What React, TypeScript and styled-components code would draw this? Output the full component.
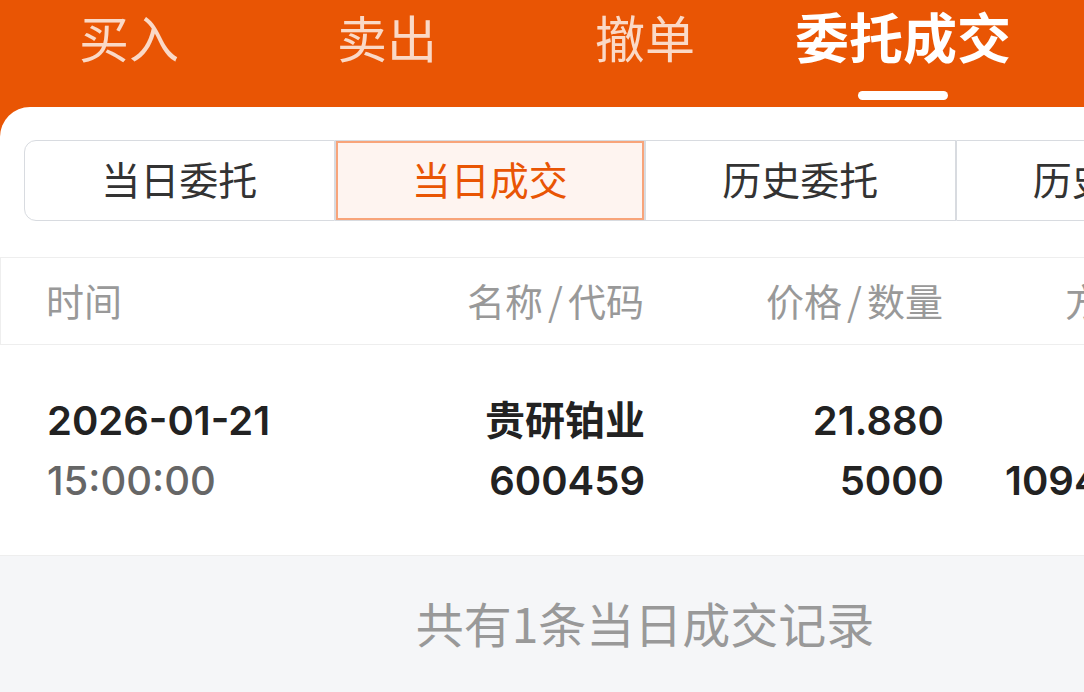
import React from "react";
import styled, { createGlobalStyle } from "styled-components";

const GlobalStyle = createGlobalStyle`
  html, body {
    margin: 0;
    padding: 0;
    overflow: hidden;
    background: #ffffff;
  }
  body {
    font-family: "Inter", "Noto Sans CJK SC", "Noto Sans", sans-serif;
    -webkit-font-smoothing: antialiased;
  }
  * { box-sizing: border-box; }
`;

const Page = styled.div`
  width: 1290px;
  height: 692px;
  display: flex;
  flex-direction: column;
  background: #e95504;
`;

const NavBar = styled.nav`
  display: flex;
  height: 107px;
  flex-shrink: 0;
`;

const NavTab = styled.div`
  flex: 1;
  display: flex;
  flex-direction: column;
  align-items: center;
  padding-top: 4px;
`;

const NavLabel = styled.span<{ $active?: boolean }>`
  font-family: "Noto Sans CJK SC", sans-serif;
  font-size: ${(p) => (p.$active ? "54px" : "50px")};
  line-height: 64px;
  font-weight: ${(p) => (p.$active ? 700 : 400)};
  color: ${(p) => (p.$active ? "#ffffff" : "rgba(255, 255, 255, 0.78)")};
  white-space: nowrap;
`;

const Indicator = styled.div`
  margin-top: 23px;
  width: 90px;
  height: 9px;
  border-radius: 5px;
  background: #ffffff;
`;

const Card = styled.main`
  flex: 1;
  display: flex;
  flex-direction: column;
  background: #ffffff;
  border-radius: 30px 30px 0 0;
  padding-top: 33px;
`;

const Segmented = styled.div`
  display: grid;
  grid-template-columns: repeat(4, 1fr);
  height: 81px;
  margin: 0 24px;
`;

const Segment = styled.div<{ $active?: boolean }>`
  display: flex;
  align-items: center;
  justify-content: center;
  padding-bottom: 5px;
  border: 1px solid #d8dbe0;
  font-family: "Noto Sans CJK SC", sans-serif;
  font-size: 39px;
  color: ${(p) => (p.$active ? "#e95504" : "#333333")};
  background: ${(p) => (p.$active ? "#fef4f0" : "#ffffff")};
  box-shadow: ${(p) => (p.$active ? "inset 0 0 0 2px #f8a47a" : "none")};
  &:first-child {
    border-radius: 12px 0 0 12px;
  }
  &:last-child {
    border-radius: 0 12px 12px 0;
  }
`;

const Grid = styled.div`
  display: grid;
  grid-template-columns: repeat(4, 1fr);
  padding: 0 47px;
`;

const HeadRow = styled(Grid)`
  margin-top: 36px;
  height: 88px;
  align-items: center;
  border: 1px solid #eeeeee;
  padding-bottom: 3px;
  padding-left: 45px;
`;

const HeadCell = styled.div<{ $align?: "left" | "right" }>`
  text-align: ${(p) => p.$align ?? "right"};
  font-family: "Noto Sans CJK SC", sans-serif;
  font-size: 38px;
  color: #999999;
  white-space: nowrap;
`;

const Slash = styled.span`
  margin: 0 5px;
`;

const DataRow = styled(Grid)`
  padding-top: 46px;
  padding-bottom: 44px;
  border-bottom: 1px solid #eeeeee;
`;

const DataCell = styled.div<{ $align?: "left" | "right" }>`
  display: flex;
  flex-direction: column;
  align-items: ${(p) => (p.$align === "left" ? "flex-start" : "flex-end")};
  white-space: nowrap;
`;

const Line = styled.span<{ $muted?: boolean }>`
  font-size: 40px;
  line-height: 60px;
  height: 60px;
  font-weight: ${(p) => (p.$muted ? 500 : 600)};
  color: ${(p) => (p.$muted ? "#666666" : "#222222")};
`;

const Footer = styled.div`
  flex: 1;
  background: #f5f6f8;
  padding-top: 40px;
  text-align: center;
  font-family: "Noto Sans CJK SC", sans-serif;
  font-size: 48px;
  line-height: 52px;
  color: #999999;
`;

const navTabs = ["买入", "卖出", "撤单", "委托成交", "查询"];
const segments = ["当日委托", "当日成交", "历史委托", "历史成交"];
const heads: [string, string][] = [
  ["名称", "代码"],
  ["价格", "数量"],
  ["方向", "金额"],
];

export default function App() {
  return (
    <>
      <GlobalStyle />
      <Page>
        <NavBar>
          {navTabs.map((t) => {
            const active = t === "委托成交";
            return (
              <NavTab key={t}>
                <NavLabel $active={active}>{t}</NavLabel>
                {active && <Indicator />}
              </NavTab>
            );
          })}
        </NavBar>
        <Card>
          <Segmented>
            {segments.map((s) => (
              <Segment key={s} $active={s === "当日成交"}>
                {s}
              </Segment>
            ))}
          </Segmented>
          <HeadRow>
            <HeadCell $align="left">时间</HeadCell>
            {heads.map(([a, b]) => (
              <HeadCell key={a}>
                {a}
                <Slash>/</Slash>
                {b}
              </HeadCell>
            ))}
          </HeadRow>
          <DataRow>
            <DataCell $align="left">
              <Line>2026-01-21</Line>
              <Line $muted>15:00:00</Line>
            </DataCell>
            <DataCell>
              <Line>贵研铂业</Line>
              <Line>600459</Line>
            </DataCell>
            <DataCell>
              <Line>21.880</Line>
              <Line>5000</Line>
            </DataCell>
            <DataCell>
              <Line>买入</Line>
              <Line>109400.000</Line>
            </DataCell>
          </DataRow>
          <Footer>共有1条当日成交记录</Footer>
        </Card>
      </Page>
    </>
  );
}
